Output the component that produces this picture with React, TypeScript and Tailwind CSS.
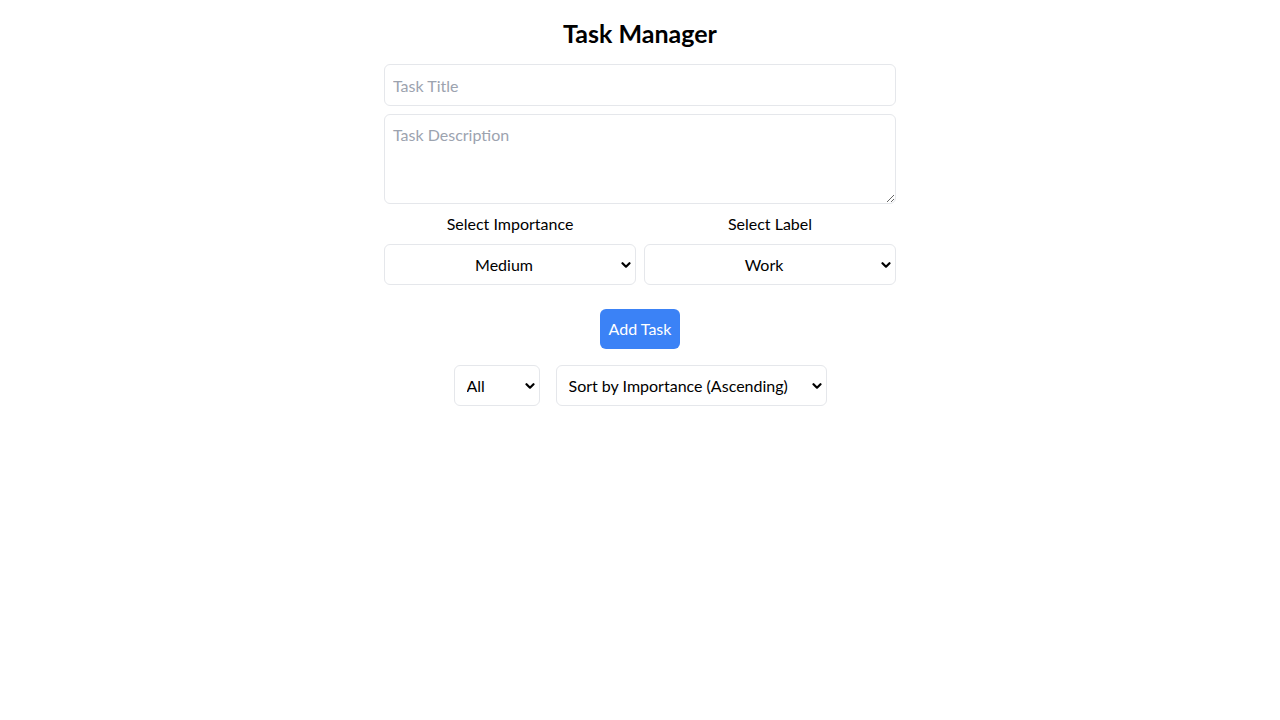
import React from "react";

function Chevron() {
  return (
    <svg
      className="pointer-events-none absolute right-[5px] top-1/2 -translate-y-1/2"
      width="10"
      height="8"
      viewBox="0 0 10 8"
    >
      <path d="M1.5 2.2 L5 5.7 L8.5 2.2" fill="none" stroke="#000" strokeWidth="2.2" strokeLinecap="round" strokeLinejoin="round" />
    </svg>
  );
}

function Select({
  value,
  options,
  className,
  center,
}: {
  value: string;
  options: string[];
  className: string;
  center?: boolean;
}) {
  return (
    <div className={"relative " + className}>
      <select
        defaultValue={value}
        className={
          "h-[41px] w-full appearance-none rounded-md border border-gray-200 bg-white py-2 text-base leading-6 text-black outline-none " +
          (center ? "pl-2 pr-5 text-center" : "pl-3 pr-6 text-left")
        }
      >
        {options.map((o) => (
          <option key={o}>{o}</option>
        ))}
      </select>
      <Chevron />
    </div>
  );
}

export default function App() {
  return (
    <div
      className="min-h-screen bg-white text-black"
      style={{ fontFamily: '"Segoe UI", Lato, "Noto Sans", sans-serif' }}
    >
      <div className="mx-auto flex w-[512px] flex-col pt-[17px]">
        <h1 className="mb-[15px] text-center text-[25px] font-bold leading-8">Task Manager</h1>
        <input
          placeholder="Task Title"
          className="h-[42px] w-full rounded-md border border-gray-200 px-2 py-2 text-base leading-6 placeholder:text-[#9ca3af] outline-none"
        />
        <textarea
          placeholder="Task Description"
          rows={3}
          className="mt-2 h-[90px] w-full rounded-md border border-gray-200 px-2 py-2 text-base leading-6 placeholder:text-[#9ca3af] outline-none"
        />
        <div className="mt-2 grid grid-cols-2 gap-2">
          <div className="flex flex-col items-center gap-2">
            <span className="text-base leading-6">Select Importance</span>
            <Select value="Medium" options={["Low", "Medium", "High"]} className="w-full" center />
          </div>
          <div className="flex flex-col items-center gap-2">
            <span className="text-base leading-6">Select Label</span>
            <Select value="Work" options={["Work", "Personal", "Other"]} className="w-full" center />
          </div>
        </div>
        <div className="mt-6 flex justify-center">
          <button className="h-10 w-20 rounded-md bg-[#3b82f6] text-base leading-6 text-white">Add Task</button>
        </div>
        <div className="mt-4 flex justify-center gap-4">
          <Select value="All" options={["All", "Completed", "Pending"]} className="w-[86px]" />
          <Select
            value="Sort by Importance (Ascending)"
            options={["Sort by Importance (Ascending)", "Sort by Importance (Descending)"]}
            className="w-[271px]"
          />
        </div>
      </div>
    </div>
  );
}
